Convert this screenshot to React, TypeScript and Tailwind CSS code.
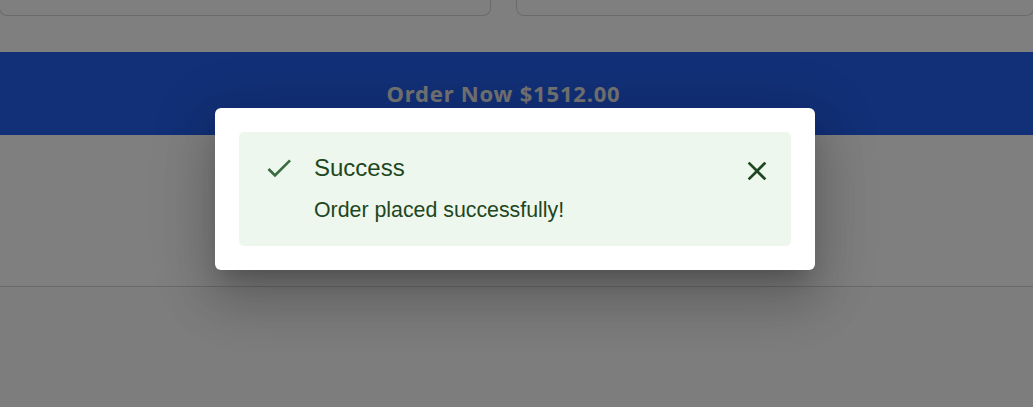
function CheckIcon() {
  return (
    <svg viewBox="0 0 24 24" className="w-8 h-8 fill-[#3b6b41]">
      <path d="M9 16.17 4.83 12l-1.42 1.41L9 19 21 7l-1.41-1.41z" />
    </svg>
  );
}

function CloseIcon() {
  return (
    <svg viewBox="0 0 24 24" className="w-8 h-8 fill-[#1e4620]">
      <path d="M19 6.41 17.59 5 12 10.59 6.41 5 5 6.41 10.59 12 5 17.59 6.41 19 12 13.41 17.59 19 19 17.59 13.41 12z" />
    </svg>
  );
}

export default function App() {
  return (
    <div className="relative h-[407px] overflow-hidden bg-[#fafafa] font-['Liberation_Sans',Arial,sans-serif]">
      {/* page behind the dialog */}
      <div className="bg-white">
        <div className="flex gap-[25px] h-[52px]">
          <div className="w-[492px] -ml-px h-4 border border-t-0 border-[#d6d6d6] rounded-b-lg bg-white" />
          <div className="flex-1 -mr-px h-4 border border-t-0 border-[#d6d6d6] rounded-b-lg bg-white" />
        </div>
        <button className="w-full h-[83px] bg-[#2461ee] text-[#e6e6e6] font-['Noto_Sans',sans-serif] font-bold text-[22px] tracking-[0.8px] pr-[26px]">
          Order Now $1512.00
        </button>
        <div className="h-[152px] border-b border-[#d4d4d4]" />
      </div>

      {/* backdrop + dialog */}
      <div className="absolute inset-0 bg-black/50 flex justify-center items-start pt-[108px] pr-[3px]">
        <div className="w-[600px] bg-white rounded-md p-6 shadow-[0px_15px_20px_-9px_rgba(0,0,0,0.2),0px_32px_51px_4px_rgba(0,0,0,0.14),0px_12px_61px_11px_rgba(0,0,0,0.12)]">
          <div className="flex items-start bg-[#edf7ed] rounded-[5px] pl-6 pr-[18px] pt-5 pb-5 text-[#1e4620]">
            <CheckIcon />
            <div className="flex-1 ml-[19px]">
              <div className="text-[24px] leading-8 mb-[10px]">Success</div>
              <div className="text-[21.33px] leading-8">Order placed successfully!</div>
            </div>
            <button className="mt-[3px]">
              <CloseIcon />
            </button>
          </div>
        </div>
      </div>
    </div>
  );
}
